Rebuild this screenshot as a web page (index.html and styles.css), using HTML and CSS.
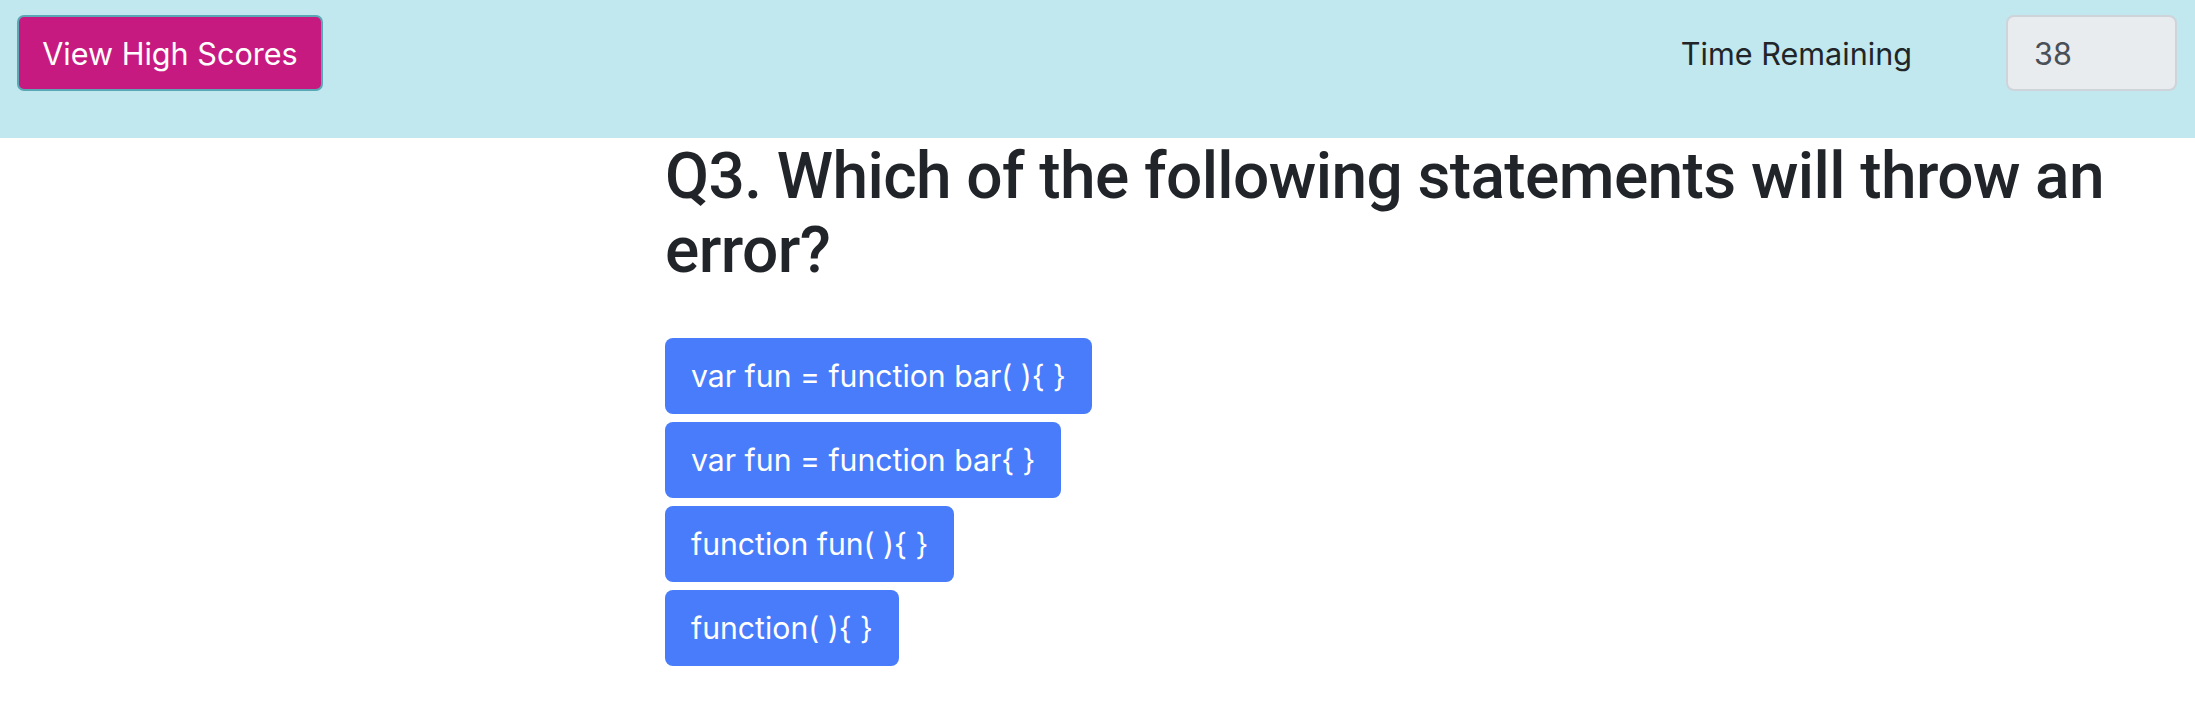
FILE: index.html
```
<!DOCTYPE html>
<html lang="en">
<head>
<meta charset="utf-8">
<title>Quiz</title>
<link rel="stylesheet" href="styles.css">
</head>
<body>
<header class="topbar">
  <button class="btn-scores" type="button">View High Scores</button>
  <div class="timer">
    <span class="timer-label">Time Remaining</span>
    <div class="timer-box">38</div>
  </div>
</header>
<main class="quiz">
  <h1 class="question">Q3. Which of the following statements will throw an error?</h1>
  <div class="answers">
    <button class="answer" type="button">var fun = function bar( ){ }</button>
    <button class="answer" type="button">var fun = function bar{ }</button>
    <button class="answer" type="button">function fun( ){ }</button>
    <button class="answer" type="button">function( ){ }</button>
  </div>
</main>
</body>
</html>
```
FILE: styles.css
```
html, body {
  margin: 0;
  padding: 0;
  background: #ffffff;
}
body {
  font-family: Inter, "Noto Sans", sans-serif;
  color: #212529;
}
.topbar {
  height: 138px;
  box-sizing: border-box;
  background: #c0e8ee;
  display: flex;
  align-items: flex-start;
  justify-content: space-between;
  padding: 15px 18px 0 17px;
}
.btn-scores {
  width: 306px;
  height: 76px;
  box-sizing: border-box;
  background: #c71a80;
  color: #ffffff;
  border: 2px solid #5aa8b6;
  border-radius: 7px;
  font-family: Inter, "Noto Sans", sans-serif;
  font-size: 30.6px;
  padding: 0;
  cursor: pointer;
}
.timer {
  display: flex;
  align-items: center;
  height: 76px;
}
.timer-label {
  font-size: 30.6px;
  color: #212529;
  margin-right: 94px;
}
.timer-box {
  width: 171px;
  height: 76px;
  box-sizing: border-box;
  background: #e9ecef;
  border: 2px solid #ced4da;
  border-radius: 8px;
  color: #495057;
  font-size: 30.6px;
  display: flex;
  align-items: center;
  padding-left: 26px;
}
.quiz {
  padding: 0 24px 0 665px;
}
.question {
  font-family: Roboto, "Liberation Sans", Arial, sans-serif;
  font-weight: 500;
  font-size: 64px;
  line-height: 74px;
  letter-spacing: -0.6px;
  margin: 2px 0 0 0;
  color: #212529;
}
.answers {
  display: flex;
  flex-direction: column;
  align-items: flex-start;
  gap: 8px;
  margin-top: 50px;
}
.answer {
  height: 76px;
  box-sizing: border-box;
  background: #487cfb;
  color: #ffffff;
  border: none;
  border-radius: 8px;
  font-family: Inter, "Noto Sans", sans-serif;
  font-size: 30.2px;
  padding: 0 26px;
  cursor: pointer;
}
```
